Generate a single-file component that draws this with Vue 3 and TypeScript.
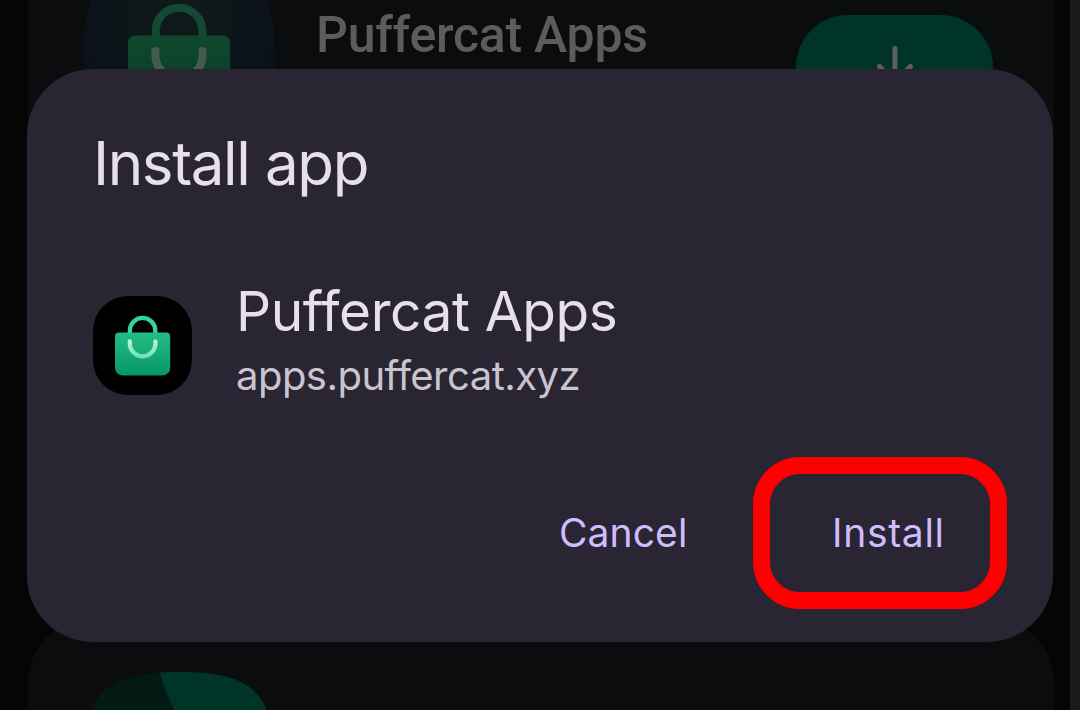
<script setup lang="ts">
import { ref } from 'vue'

interface AppInfo {
  name: string
  host: string
}

const app: AppInfo = { name: 'Puffercat Apps', host: 'apps.puffercat.xyz' }
const actions = ref<{ id: string; label: string }[]>([
  { id: 'cancel', label: 'Cancel' },
  { id: 'install', label: 'Install' },
])
</script>

<template>
  <div class="screen">
    <div class="page">
      <section class="card first">
        <svg class="store-icon" viewBox="-96 -96 192 192">
          <defs>
            <radialGradient id="tile" cx="0.5" cy="0.3" r="0.6">
              <stop offset="0" stop-color="#101a1a" />
              <stop offset="1" stop-color="#0b1019" />
            </radialGradient>
            <linearGradient id="dimBag" x1="0" y1="0" x2="0" y2="1">
              <stop offset="0" stop-color="#10482f" />
              <stop offset="1" stop-color="#063828" />
            </linearGradient>
          </defs>
          <path d="M0-96C75-96 96-75 96 0S75 96 0 96-96 75-96 0-75-96 0-96Z" fill="url(#tile)" />
          <path d="M-23.3-21V-27a23.3 23.3 0 0 1 46.6 0v6" fill="none" stroke="#134a33" stroke-width="8" />
          <path d="M-43-22.5H43q8 0 8 8V42q0 15-15 15H-36q-15 0-15-15V-14.5q0-8 8-8Z" fill="url(#dimBag)" />
          <path d="M-23.6-7v4a23.6 23.6 0 0 0 47.2 0v-4" fill="none" stroke="#475a4f" stroke-width="8" stroke-linecap="round" />
        </svg>
        <h2 class="store-name">{{ app.name }}</h2>
        <div class="download">
          <svg viewBox="0 0 48 60" width="48" height="60" fill="none" stroke="#5e5e5e" stroke-width="5" stroke-linecap="round" stroke-linejoin="round">
            <path d="M24 3.5V38M8.5 21.5 24 37 39.5 21.5" />
          </svg>
        </div>
      </section>
      <section class="card second">
        <svg class="store-icon" viewBox="-96 -96 192 192">
          <defs>
            <clipPath id="tileClip">
              <path d="M0-96C75-96 96-75 96 0S75 96 0 96-96 75-96 0-75-96 0-96Z" />
            </clipPath>
          </defs>
          <g clip-path="url(#tileClip)">
            <rect x="-96" y="-96" width="192" height="192" fill="#031913" />
            <path d="M-19.5-97Q-14-75-4-57L30 0H97V-97Z" fill="#003427" />
          </g>
        </svg>
      </section>
    </div>
    <div class="gutter"></div>

    <div class="dialog" role="dialog">
      <h1 class="title">Install app</h1>
      <div class="app-row">
        <div class="app-icon">
          <svg viewBox="0 0 99 99" width="99" height="99">
            <defs>
              <linearGradient id="bag" x1="0" y1="0" x2="0" y2="1">
                <stop offset="0" stop-color="#24bd86" />
                <stop offset="1" stop-color="#079767" />
              </linearGradient>
              <linearGradient id="smile" x1="0" y1="0" x2="0" y2="1">
                <stop offset="0" stop-color="#b9f3d6" />
                <stop offset="1" stop-color="#72e3b3" />
              </linearGradient>
            </defs>
            <path d="M36.9 38V34.6a12.7 12.7 0 0 1 25.4 0V38" fill="none" stroke="#34d399" stroke-width="4.3" />
            <path d="M26 36.5H73q4.2 0 4.2 4.2V71q0 8.5-8.5 8.5H30.5q-8.5 0-8.5-8.5V40.700q0-4.2 4-4.2Z" fill="url(#bag)" />
            <path d="M36.8 45.500v2a12.8 12.8 0 0 0 25.6 0v-2" fill="none" stroke="url(#smile)" stroke-width="4.3" stroke-linecap="round" />
          </svg>
        </div>
        <div class="app-text">
          <div class="app-name">{{ app.name }}</div>
          <div class="app-host">{{ app.host }}</div>
        </div>
      </div>
      <div class="actions">
        <button v-for="a in actions" :key="a.id" type="button" :class="['action', a.id]">
          {{ a.label }}
        </button>
      </div>
    </div>
  </div>
</template>

<style scoped>
.screen {
  position: relative;
  display: flex;
  width: 1080px;
  height: 710px;
  overflow: hidden;
  background: #050505;
  font-family: Inter, 'Liberation Sans', sans-serif;
}
.page {
  flex: 1;
  padding: 0 16px 0 28px;
}
.card {
  box-sizing: border-box;
  width: 1026px;
  background: #0a0c0d;
}
.first {
  display: flex;
  align-items: flex-start;
  height: 580px;
  border-radius: 0 0 66px 66px;
}
.second {
  height: 300px;
  margin-top: 37px;
  padding: 55px;
  border-radius: 66px;
}
.store-icon {
  display: block;
  flex: none;
  width: 192px;
  height: 192px;
}
.first .store-icon {
  margin: -38px 0 0 55px;
}
.store-name {
  width: 479px;
  margin: 5px 0 0 41px;
  font: 500 50px/60px Roboto, sans-serif;
  letter-spacing: -0.25px;
  color: #5c5c5c;
  white-space: nowrap;
}
.download {
  display: flex;
  justify-content: center;
  width: 197px;
  height: 104px;
  margin: 15px 0 0 1px;
  padding-top: 30px;
  box-sizing: border-box;
  border-radius: 52px;
  background: #003427;
}
.gutter {
  width: 10px;
  background: #1a1a1a;
}
.dialog {
  position: absolute;
  top: 69px;
  left: 27px;
  box-sizing: border-box;
  width: 1026px;
  height: 573px;
  padding: 58px 46px 33px 66px;
  border-radius: 66px;
  background: #292532;
  color: #e6e0e9;
  white-space: nowrap;
}
.title {
  height: 72px;
  margin: 0;
  font-size: 60px;
  font-weight: 400;
  line-height: 72px;
  letter-spacing: -1.35px;
}
.app-row {
  display: flex;
  margin-top: 87px;
}
.app-icon {
  width: 99px;
  height: 99px;
  margin-top: 10px;
  margin-right: 44px;
  border-radius: 35px;
  background: #000;
}
.app-icon svg {
  display: block;
}
.app-name {
  height: 66px;
  font-size: 55px;
  line-height: 50px;
  letter-spacing: -0.4px;
}
.app-host {
  height: 48px;
  font-size: 40px;
  line-height: 48px;
  letter-spacing: -0.53px;
  color: #cac4d0;
}
.actions {
  display: flex;
  justify-content: flex-end;
  align-items: center;
  margin-top: 57px;
}
.action {
  box-sizing: border-box;
  padding: 0;
  border: 0;
  background: none;
  color: #cfbcff;
  font: 400 39px/48px Inter, 'Liberation Sans', sans-serif;
  text-align: left;
}
.cancel {
  width: 194px;
  letter-spacing: 0.1px;
}
.install {
  width: 254px;
  height: 152px;
  padding-left: 62px;
  border: 17px solid #f00;
  border-radius: 47px;
  letter-spacing: 0.7px;
}
</style>

<style>
body {
  margin: 0;
  background: #050505;
}
</style>
